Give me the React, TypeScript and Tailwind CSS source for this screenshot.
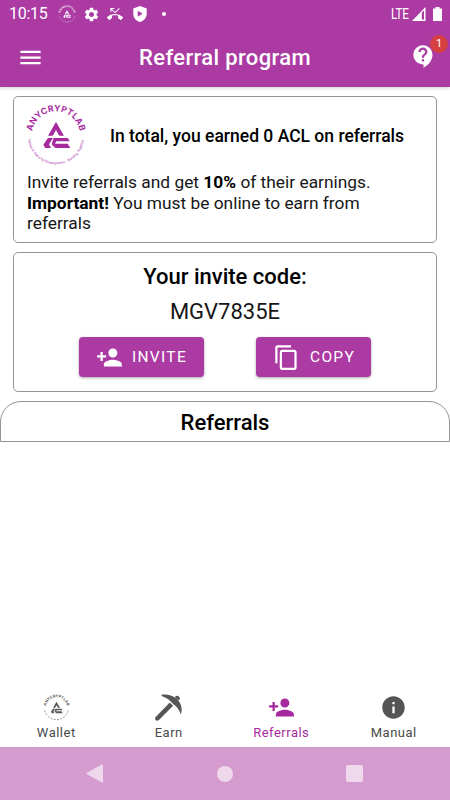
import { useState } from "react";
import { MdContactSupport, MdContentCopy, MdInfo, MdMenu, MdPersonAdd, MdPhoneMissed, MdSettings } from "react-icons/md";

const INVITE_CODE = "MGV7835E";

function Logo({ className = "", tiny = false }: { className?: string; tiny?: boolean }) {
  return (
    <svg viewBox="0 0 186 186" className={`overflow-visible ${className}`} fill="currentColor">
      <defs>
        <path id="logo-top" d="M21 94 A72 72 0 0 1 165 94" />
        <path id="logo-bottom" d="M9 97 A84 84 0 0 0 177 97" />
      </defs>
      <text fontSize="26" fontWeight="700" fontFamily="Inter, sans-serif" textAnchor="middle" textLength="202">
        <textPath href="#logo-top" startOffset="50%">ANYCRYPTLAB</textPath>
      </text>
      {tiny ? (
        <path d="M12 112a83 83 0 0 0 162 0" fill="none" stroke="currentColor" strokeWidth="6" strokeDasharray="14 9" opacity="0.7" />
      ) : (
        <text fontSize="10" fontFamily="Inter, sans-serif" textAnchor="middle" textLength="244">
          <textPath href="#logo-bottom" startOffset="50%">Network Security Development - Building Together</textPath>
        </text>
      )}
      <path d="M93 54L117 95H103L93 78L83 95H69Z" />
      <path d="M69 102H84L72 121L78 132H61L55 122Z" />
      <path d="M86 102H128L134 112H94L90 119H128L136 132H91L80 121Z" />
    </svg>
  );
}

function Pickaxe({ className }: { className?: string }) {
  return (
    <svg viewBox="0 0 82 82" className={className} fill="currentColor">
      <path d="M2 70L45 26L55 36L12 79Q6 84 2 79Q-2 75 2 70Z" />
      <path d="M20 2C48 -3 82 16 81 48L79 62C73 46 66 38 55 30C46 20 36 11 20 6Z" />
      <path d="M60 9Q67 2 73 8Q79 14 71 20Z" />
    </svg>
  );
}

function StatusBar() {
  return (
    <div className="flex h-7 items-center pr-2 pl-[9px] text-white">
      <span className="w-[39px] text-[16px] leading-none tracking-[-0.3px]">10:15</span>
      <Logo tiny className="ml-[10px] size-[18px]" />
      <MdSettings className="ml-[7px] size-[17px]" />
      <MdPhoneMissed className="ml-[7px] size-4" />
      <svg viewBox="0 0 14 16" className="ml-[10px] h-4 w-[14px]" fill="currentColor">
        <path fillRule="evenodd" d="M7 0L13.7 2.5V7.7C13.7 11.7 11 14.7 7 16C3 14.7 .3 11.7 .3 7.7V2.5ZM4.7 4.7V10.7L9.7 7.7Z" />
      </svg>
      <span className="ml-[15px] size-1 rounded-full bg-white" />
      <span className="-mr-[4px] ml-auto origin-left scale-x-[0.78] text-[15px] leading-none tracking-[-0.3px]">LTE</span>
      <svg viewBox="0 0 14 14" className="ml-[2px] size-[14px]" fill="currentColor">
        <path fillRule="evenodd" d="M13.5 0V14H0ZM12 3.5L9.8 5.7V12.6H12Z" />
      </svg>
      <svg viewBox="0 0 9 14" className="ml-[7px] h-[14px] w-[9px]" fill="currentColor">
        <path d="M2.5 0H6.5V1.5H9V14H0V1.5H2.5Z" />
      </svg>
    </div>
  );
}

const tabs = [
  { name: "Wallet", icon: <Logo tiny className="size-[27px]" /> },
  { name: "Earn", icon: <Pickaxe className="size-[27px]" /> },
  { name: "Referrals", icon: <MdPersonAdd className="size-[27px]" /> },
  { name: "Manual", icon: <MdInfo className="size-[27px]" /> },
];

export default function App() {
  const [active, setActive] = useState("Referrals");

  return (
    <div className="flex h-[800px] w-[450px] flex-col overflow-hidden bg-white font-[Roboto,sans-serif] text-black">
      <header className="h-[87px] shrink-0 bg-[#ab3aa3] text-white shadow-[0_1px_4px_rgba(0,0,0,0.2)]">
        <StatusBar />
        <div className="grid h-[59px] grid-cols-[40px_1fr_40px] items-center pr-[13px] pl-[17px]">
          <button aria-label="Menu">
            <MdMenu className="size-[27px]" />
          </button>
          <h1 className="pr-1 text-center text-[22px] font-medium tracking-[0.35px]">Referral program</h1>
          <button aria-label="Support" className="relative mb-[2px] justify-self-end">
            <MdContactSupport className="size-[27px]" />
            <span className="absolute -top-[8px] left-5 flex size-[18px] items-center justify-center rounded-full bg-[#d64040] text-[11px]">
              1
            </span>
          </button>
        </div>
      </header>

      <main className="flex-1">
        <section className="mx-[13px] mt-[9px] h-[147px] rounded-[5px] border border-[#959595] px-[13px] pt-[7px]">
          <div className="flex items-center">
            <Logo className="-ml-[2px] size-[62px] text-[#a52a9e]" />
            <p className="ml-[23px] pt-[2px] text-[17.5px] font-medium">In total, you earned 0 ACL on referrals</p>
          </div>
          <p className="mt-[6px] text-[17.35px] leading-[20.5px] text-[#161616]">
            Invite referrals and get <b className="text-black">10%</b> of their earnings.
            <br />
            <b className="text-black">Important!</b> You must be online to earn from
            <br />
            referrals
          </p>
        </section>

        <section className="mx-[13px] mt-[9px] h-[140px] rounded-[5px] border border-[#959595] text-center">
          <h2 className="mt-[8px] text-[22px] leading-8 font-medium">Your invite code:</h2>
          <p className="mt-[3px] text-[22px] leading-8 text-[#161616]">{INVITE_CODE}</p>
          <div className="mt-[9px] flex justify-center gap-[52px] text-[15.5px] tracking-[1.3px] text-white">
            <button className="flex h-10 w-[125px] items-center rounded bg-[#ab3aa3] pl-[17px] shadow-[0_1px_3px_rgba(0,0,0,0.35)]">
              <MdPersonAdd className="mr-[9px] size-[27px]" />
              <span className="pt-px">INVITE</span>
            </button>
            <button
              onClick={() => navigator.clipboard.writeText(INVITE_CODE)}
              className="flex h-10 w-[115px] items-center rounded bg-[#ab3aa3] pl-[17px] shadow-[0_1px_3px_rgba(0,0,0,0.35)]"
            >
              <MdContentCopy className="mr-[10px] size-[27px]" />
              <span className="pt-px">COPY</span>
            </button>
          </div>
        </section>

        <h2 className="mt-[9px] h-[41px] rounded-t-[21px] border border-[#959595] text-center text-[22px] leading-[41px] font-medium">
          Referrals
        </h2>
      </main>

      <nav className="grid h-[53px] grid-cols-4">
        {tabs.map((tab) => (
          <button
            key={tab.name}
            onClick={() => setActive(tab.name)}
            className={`flex flex-col items-center text-[13px] leading-[23px] tracking-[0.5px] ${
              active === tab.name ? "text-[#a52a9e]" : "text-[#4a4a4a]"
            }`}
          >
            <span className={active === tab.name ? "" : "text-[#555]"}>{tab.icon}</span>
            {tab.name}
          </button>
        ))}
      </nav>

      {/* Android navigation buttons */}
      <div className="flex h-[53px] items-center justify-between bg-[#d59bcf] pr-[87px] pl-[86px] text-[#efd7ec]">
        <svg viewBox="0 0 17 19" className="h-[19px] w-[17px]" fill="currentColor">
          <path d="M15.5 .5Q17 0 17 1.5V17.5Q17 19 15.5 18.2L1 10.3Q0 9.5 1 8.7Z" />
        </svg>
        <span className="size-4 rounded-full bg-current" />
        <span className="size-[17px] rounded-[2px] bg-current" />
      </div>
    </div>
  );
}
